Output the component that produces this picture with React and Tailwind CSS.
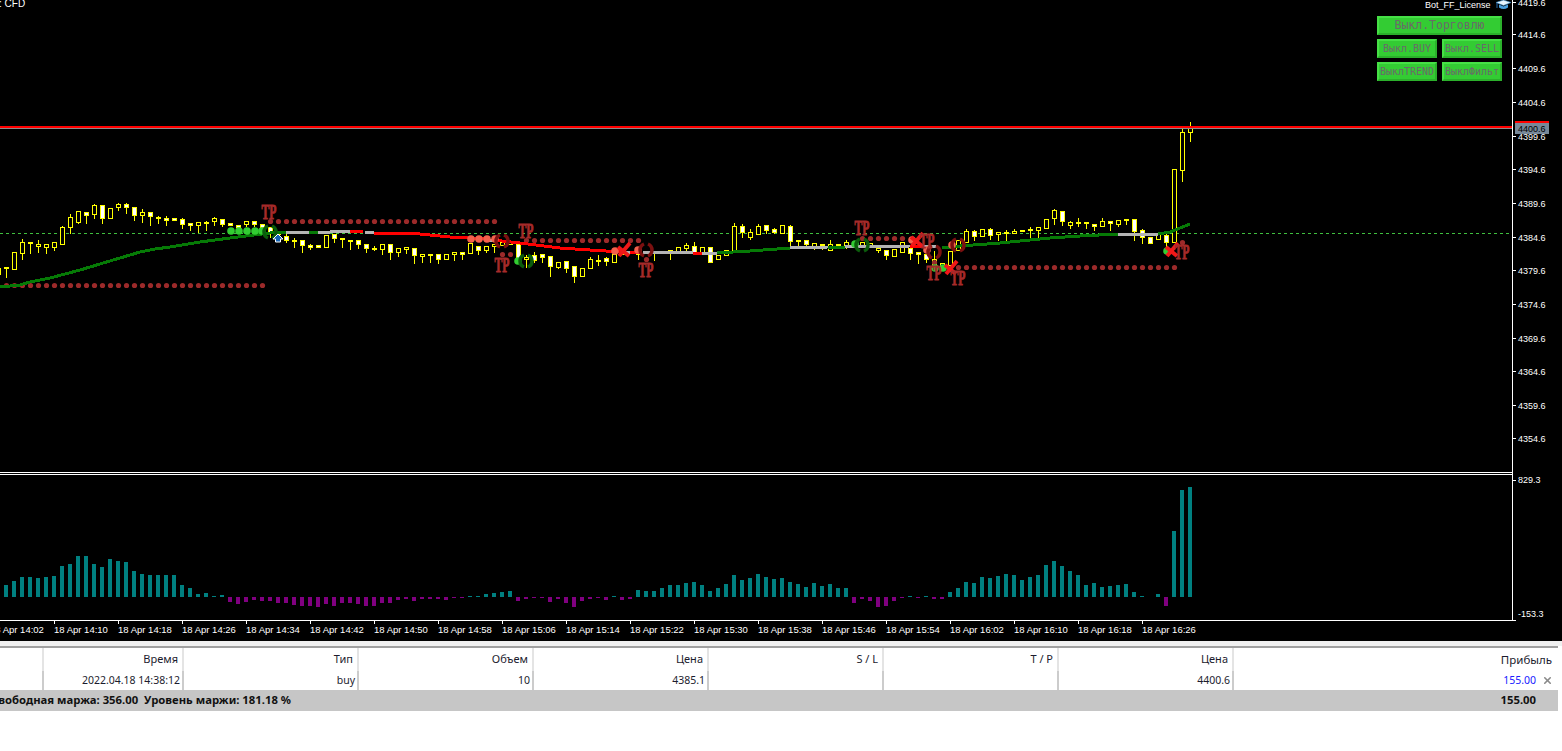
import { X } from 'lucide-react'

// Candles left to right, 8px apart: [bodyTop, bodyBottom, wickTop, wickBottom, filled]
const candles = [
  [267,268,267,277,0],[252,269,252,269,0],[242,253,239,259,0],[242,243,242,253,0],[244,246,240,252,0],[244,247,244,253,0],
  [242,247,242,250,0],[227,244,226,244,0],[217,227,214,233,0],[211,222,211,223,0],[212,215,212,223,1],[205,214,204,218,0],
  [205,218,205,223,1],[208,218,208,218,0],[204,207,203,210,0],[204,207,203,213,1],[207,215,207,220,1],[212,215,209,222,0],
  [212,216,212,225,1],[217,218,216,223,0],[218,220,216,225,1],[218,220,218,220,1],[219,224,218,228,1],[223,225,223,230,1],
  [222,225,222,232,0],[222,223,221,230,0],[218,221,217,225,0],[219,224,219,226,1],[223,225,223,225,1],[225,227,225,227,1],
  [221,224,221,226,0],[221,224,221,226,1],[224,227,224,230,1],[227,232,227,237,1],[232,234,232,234,1],[236,240,234,242,1],
  [240,241,238,247,0],[240,245,240,252,1],[245,247,244,249,1],[245,247,245,247,1],[235,247,235,247,0],[234,238,234,242,1],
  [238,239,238,247,0],[240,241,240,249,0],[240,244,240,248,1],[244,248,244,252,1],[248,249,246,250,0],[244,249,244,254,0],
  [244,252,244,259,1],[248,252,248,256,0],[247,249,247,253,0],[248,255,248,263,1],[254,256,254,262,0],[254,255,254,262,0],
  [254,259,254,263,1],[254,259,254,259,0],[252,254,252,260,0],[252,254,252,259,1],[243,253,243,253,0],[246,250,246,254,1],
  [246,250,246,252,0],[244,246,244,252,0],[242,245,242,245,0],[242,244,242,244,0],[244,258,244,258,1],[257,259,255,267,0],
  [255,260,252,262,1],[254,257,254,262,1],[256,266,256,276,1],[262,267,262,268,0],[261,268,261,272,1],[266,276,266,282,1],
  [268,276,268,276,0],[259,268,257,268,0],[260,261,255,265,0],[258,261,257,265,1],[254,262,254,262,0],[251,254,251,254,0],
  [252,253,252,253,0],[253,254,250,259,0],[251,253,251,253,0],[252,253,252,260,0],[251,252,251,252,0],[250,252,250,259,0],
  [247,251,247,251,0],[245,248,243,250,0],[246,252,242,254,1],[247,253,247,253,0],[247,262,247,262,1],[255,259,255,259,0],
  [250,255,250,255,0],[226,251,223,251,0],[226,232,224,237,1],[232,237,229,239,0],[226,234,224,234,0],[225,230,225,233,1],
  [229,232,228,233,1],[225,233,225,233,0],[226,241,225,246,1],[240,241,240,247,0],[240,244,240,247,1],[243,246,243,249,0],
  [244,245,244,249,0],[244,250,240,250,0],[244,245,244,248,0],[242,246,240,248,0],[242,246,242,246,0],[242,247,242,247,0],
  [243,247,243,247,0],[248,250,248,252,0],[250,255,250,259,1],[249,256,249,256,0],[242,252,242,252,0],[248,253,248,259,1],
  [252,254,252,263,1],[254,259,254,262,1],[259,265,251,265,0],[263,268,263,268,0],[251,265,251,265,0],[240,250,240,250,0],
  [231,242,229,242,0],[231,236,230,240,1],[229,236,229,236,0],[229,235,228,239,1],[232,234,232,240,0],[232,233,230,240,0],
  [231,233,229,233,0],[230,231,230,231,0],[229,230,227,240,0],[227,230,227,239,0],[219,228,219,228,0],[210,218,209,224,0],
  [211,221,211,225,1],[222,225,221,228,0],[222,223,218,226,0],[222,223,222,228,0],[224,226,224,230,1],[221,226,218,226,0],
  [221,223,221,230,1],[220,224,220,226,0],[219,220,219,224,0],[219,231,219,240,1],[230,237,229,243,1],[237,243,237,243,1],
  [233,239,233,239,0],[235,242,232,251,1],[169,242,169,242,0],[132,170,128,181,0],[128,132,122,141,0],
]

// Oscillator values, one per candle, in px above or below the zero line
const histogram = [
  12,16,20,20,19,20,21,31,33,41,41,33,30,38,36,35,26,23,22,22,22,22,12,9,3,4,1,2,
  -5,-7,-5,-3,-4,-4,-6,-6,-8,-9,-9,-10,-7,-9,-6,-6,-7,-9,-9,-6,-6,-3,
  -2,-4,-2,-2,-2,-3,-1,-1,1,1,3,4,5,6,-4,-2,-1,-1,-5,-2,-6,-10,-4,-2,-1,-3,1,-3,-2,
  7,6,6,9,12,12,14,15,12,6,9,13,22,17,19,23,20,18,19,15,13,
  10,14,11,13,9,9,-6,-2,-4,-10,-9,-4,-1,1,-1,1,-2,-2,
  5,9,15,14,20,19,21,23,22,17,20,22,32,36,31,26,22,12,14,10,11,12,13,5,1,0,3,-9,66,107,110,
]

const prices = [
  ['4419.6', 2], ['4414.6', 34], ['4409.6', 68], ['4404.6', 102], ['4399.6', 136], ['4394.6', 169], ['4389.6', 203],
  ['4384.6', 237], ['4379.6', 270], ['4374.6', 304], ['4369.6', 338], ['4364.6', 371], ['4359.6', 405], ['4354.6', 438],
]

const GREEN = '#067a06'
const GRAY = '#b4b4b4'
const RED = '#ff0000'

const maSegments = [
  [GREEN, '0,287 20,285 30,282 50,278 65,274 80,270 100,264 120,258 140,252 155,249 170,247 200,242 230,238 270,233 286,232'],
  [GRAY, '286,232 309,232'],
  [GREEN, '309,232 318,232'],
  [GRAY, '318,232 330,232 350,231'],
  [RED, '350,231 363,231'],
  [GRAY, '365,232 374,232'],
  [RED, '374,233 400,233 420,234 450,237 486,239'],
  [GRAY, '486,240 493,240'],
  [RED, '493,240 520,243 560,248 590,250 622,252'],
  [GRAY, '622,252 630,252'],
  [RED, '630,252 640,252'],
  [GRAY, '643,252 650,252 693,253'],
  [RED, '693,253 702,253'],
  [GRAY, '702,253 717,253'],
  [GREEN, '717,253 750,251 790,248'],
  [GRAY, '790,248 828,247'],
  [GREEN, '828,247 845,247'],
  [GRAY, '845,247 910,246'],
  [RED, '910,246 923,246'],
  [GRAY, '923,246 936,246'],
  [GREEN, '942,248 960,246 1000,243 1050,238 1080,236 1118,234'],
  [GRAY, '1118,234 1158,234'],
  [GREEN, '1158,234 1170,232 1175,230 1190,224'],
]

const dotRows = [
  [285, 6, 262],
  [221, 270, 494],
  [240, 526, 638],
  [254, 502, 510],
  [259, 646, 646],
  [238, 862, 902],
  [267, 958, 1174],
  [242, 1182, 1182],
  [262, 934, 934],
]

const tpLabels = [[269, 219], [526, 238], [502, 272], [646, 277], [862, 235], [927, 248], [934, 280], [958, 285], [1182, 259]]
const greenDots = [[231, 231], [239, 231], [247, 231], [255, 231], [262, 231], [518, 261], [855, 244], [935, 268], [943, 268], [1167, 251]]
const salmonDots = [[471, 239], [479, 239], [487, 239], [495, 239], [615, 251], [638, 250], [912, 240], [927, 250], [952, 245]]
const greenRings = [[270, 232], [526, 261], [862, 245]]
const redRings = [[502, 241], [646, 250], [934, 252], [958, 245]]
const crosses = [[624, 250], [917, 240], [951, 268], [1172, 250]]

const times = ['14:02', '14:10', '14:18', '14:26', '14:34', '14:42', '14:50', '14:58', '15:06', '15:14', '15:22', '15:30', '15:38', '15:46', '15:54', '16:02', '16:10', '16:18', '16:26']

const columns = [
  { w: 'w-[44px]', head: '', cell: '' },
  { w: 'w-[140px]', head: 'Время', cell: '2022.04.18 14:38:12' },
  { w: 'w-[175px]', head: 'Тип', cell: 'buy' },
  { w: 'w-[175px]', head: 'Объем', cell: '10' },
  { w: 'w-[175px]', head: 'Цена', cell: '4385.1' },
  { w: 'w-[175px]', head: 'S / L', cell: '' },
  { w: 'w-[175px]', head: 'T / P', cell: '' },
  { w: 'w-[175px]', head: 'Цена', cell: '4400.6' },
]

function Candle({ index, data }) {
  const [top, bottom, wickTop, wickBottom, filled] = data
  const x = 6 + index * 8
  return (
    <g>
      <line x1={x + 0.5} x2={x + 0.5} y1={wickTop} y2={wickBottom + 1} stroke="#ffff00" />
      <rect x={x - 1.5} y={top + 0.5} width={4} height={Math.max(bottom - top, 1)} fill={filled ? '#ffffff' : '#000000'} stroke="#ffff00" />
    </g>
  )
}

function Ring({ x, y, color }) {
  return (
    <g fill="none" stroke={color} strokeWidth="3.5">
      <path d={`M${x - 2} ${y - 6} A6.5 6.5 0 0 0 ${x - 2} ${y + 6}`} />
      <path d={`M${x + 2} ${y - 6} A6.5 6.5 0 0 1 ${x + 2} ${y + 6}`} />
    </g>
  )
}

function MainChart() {
  return (
    <svg className="block w-full h-[473px]" viewBox="0 0 1562 473" fontFamily="'Liberation Sans', sans-serif">
      <text x="-1" y="7" fontSize="10" fill="#ffffff">: CFD</text>

      <g shapeRendering="crispEdges">
        <line x1="0" x2="1512" y1="233.5" y2="233.5" stroke="#3fbf3f" strokeDasharray="3 3" />
        <Candle index={-1} data={[268, 274, 268, 274, 1]} />
        {candles.map((c, i) => <Candle key={i} index={i} data={c} />)}
      </g>

      {dotRows.map(([y, from, to]) =>
        Array.from({ length: (to - from) / 8 + 1 }, (_, i) => (
          <circle key={`${y}-${i}`} cx={from + i * 8 + 0.5} cy={y + 0.5} r="2.6" fill="#9c2a2a" />
        ))
      )}

      <g fill="none" strokeWidth="3" shapeRendering="crispEdges">
        {maSegments.map(([color, points], i) => <polyline key={i} points={points} stroke={color} />)}
      </g>

      {salmonDots.map(([x, y]) => <circle key={x} cx={x} cy={y} r="3.8" fill="#f4604c" />)}
      {greenDots.map(([x, y]) => <circle key={x} cx={x} cy={y} r="3.8" fill="#32cd32" />)}
      {greenRings.map(([x, y]) => <Ring key={x} x={x} y={y} color="#0b5c0b" />)}
      {redRings.map(([x, y]) => <Ring key={x} x={x} y={y} color="#7c1010" />)}
      {crosses.map(([x, y]) => (
        <path key={x} d={`M${x - 6} ${y - 3} L${x + 5} ${y + 6} M${x - 5} ${y + 6} L${x + 6} ${y - 7}`} stroke="#f01818" strokeWidth="4" fill="none" />
      ))}
      {tpLabels.map(([x, y]) => (
        <text key={x} x={x - 7.5} y={y} fontFamily="'Liberation Serif', serif" fontWeight="700" fontSize="21" fill="#a52a2a" stroke="#a52a2a" strokeWidth="1" textLength="15" lengthAdjust="spacingAndGlyphs">TP</text>
      ))}
      <path d="M278 234 L283 239 L280.5 239 L280.5 242 L275.5 242 L275.5 239 L273 239 Z" fill="#1464b4" stroke="#ffffff" />

      <g shapeRendering="crispEdges">
        <rect x="0" y="126" width="1512" height="2" fill="#ff0000" />
        <rect x="0" y="128" width="1512" height="1" fill="#8a8a8a" />
        <rect x="1512" y="0" width="1" height="473" fill="#ffffff" />
        <rect x="0" y="472" width="1513" height="1" fill="#ffffff" />
        {prices.map(([, y]) => <rect key={y} x="1512" y={y} width="4" height="1" fill="#ffffff" />)}
      </g>
      {prices.map(([label, y]) => (
        <text key={label} x="1518" y={y + 3.5} fontSize="9" fill="#ffffff">{label}</text>
      ))}

      <g shapeRendering="crispEdges">
        <rect x="1515" y="123" width="34" height="11" fill="#778899" />
        <rect x="1515" y="121" width="34" height="2" fill="#ff0000" />
      </g>
      <text x="1518" y="132" fontSize="9" fill="#000000">4400.6</text>
    </svg>
  )
}

function IndicatorChart() {
  return (
    <svg className="block w-full h-[148px]" viewBox="0 473 1562 148" fontFamily="'Liberation Sans', sans-serif">
      <g shapeRendering="crispEdges">
        {histogram.map((v, i) => (
          <rect key={i} x={4 + i * 8} y={v >= 0 ? 597 - v : 597} width={4} height={Math.abs(v)} fill={v >= 0 ? '#008080' : '#800080'} />
        ))}
        <rect x="0" y="474" width="1513" height="1" fill="#ffffff" />
        <rect x="0" y="620" width="1513" height="1" fill="#ffffff" />
        <rect x="1512" y="473" width="1" height="148" fill="#ffffff" />
        <rect x="1512" y="480" width="4" height="1" fill="#ffffff" />
        <rect x="1512" y="620" width="4" height="1" fill="#ffffff" />
      </g>
      <text x="1518" y="483" fontSize="9" fill="#ffffff">829.3</text>
      <text x="1518" y="617" fontSize="9" fill="#ffffff">-153.3</text>
    </svg>
  )
}

function TimeAxis() {
  return (
    <div className="flex h-[20px] bg-black -ml-[10px] overflow-hidden">
      {times.map((t) => (
        <div key={t} className="w-[64px] shrink-0">
          <div className="w-px h-[3px] bg-white" />
          <div className="text-[9.5px] leading-[12px] text-white whitespace-nowrap">18 Apr {t}</div>
        </div>
      ))}
    </div>
  )
}

function ToggleButton({ label, className }) {
  return (
    <div className={`flex items-center justify-center h-[19px] bg-[#33cc33] border-2 border-t-[#46e046] border-l-[#46e046] border-r-[#2bb02b] border-b-[#2bb02b] font-['DejaVu_Sans_Mono'] text-[#6a6a6a] whitespace-nowrap ${className}`}>
      {label}
    </div>
  )
}

function GraduationCap() {
  return (
    <svg width="15" height="10" viewBox="0 0 15 10">
      <path d="M7.5 0 L15 2.5 L7.5 5.5 L0 2.5 Z" fill="#e8f4fc" stroke="#3a8fd0" strokeWidth="0.6" />
      <path d="M3 4.5 L3 7.5 Q7.5 10.5 12 7.5 L12 4.5 L7.5 6.5 Z" fill="#4aa0e0" />
      <rect x="0.5" y="3" width="1" height="5" fill="#2a6fb0" />
    </svg>
  )
}

function ChartOverlay() {
  return (
    <>
      <div className="absolute top-0 left-[1425px] flex items-center gap-[5px] h-[10px] text-[9px] leading-[10px] text-white">
        <span>Bot_FF_License</span>
        <GraduationCap />
      </div>
      <div className="absolute top-[16px] left-[1377px] w-[125px] flex flex-col gap-[4px]">
        <ToggleButton label="Выкл.Торговлю" className="w-full h-[19px] text-[11.5px]" />
        <div className="flex gap-[5px]">
          <ToggleButton label="Выкл.BUY" className="w-[60px] text-[10px]" />
          <ToggleButton label="Выкл.SELL" className="w-[60px] text-[10px]" />
        </div>
        <div className="flex gap-[5px]">
          <ToggleButton label="ВыклTREND" className="w-[60px] text-[10px]" />
          <ToggleButton label="ВыклФильт" className="w-[60px] text-[10px]" />
        </div>
      </div>
    </>
  )
}

function TradeTable() {
  return (
    <div className="flex-1 bg-white text-[#1c1c2e] font-['Noto_Sans']">
      <div className="h-[5px] bg-[#f0f0f0]" />
      <div className="flex h-[25px] mr-[4px] border-t-2 border-t-[#a0a0a0] text-[11px]">
        {columns.map((col, i) => (
          <div key={i} className={`${col.w} shrink-0 flex items-center justify-end pr-[4px] border-r-2 border-r-[#e4e4e4]`}>{col.head}</div>
        ))}
        <div className="flex-1 flex items-center justify-end pr-[6px] text-[11.5px]">Прибыль</div>
      </div>
      <div className="flex h-[19px] mr-[4px] text-[10.5px]">
        {columns.map((col, i) => (
          <div key={i} className={`${col.w} shrink-0 flex items-center justify-end pr-[2px] border-r-2 border-r-[#cccccc]`}>{col.cell}</div>
        ))}
        <div className="flex-1 flex items-center justify-end">
          <span className="text-[#2020ff]">155.00</span>
          <X size={11} strokeWidth={3.5} className="text-[#8a8a8a] ml-[6px] mr-[5px]" />
        </div>
      </div>
      <div className="flex items-center justify-between h-[21px] mr-[4px] pr-[22px] -ml-[9px] bg-[#c6c6c6] font-bold text-[#111111] text-[11.3px]">
        <span className="whitespace-pre">Свободная маржа: 356.00  Уровень маржи: 181.18 %</span>
        <span>155.00</span>
      </div>
    </div>
  )
}

export default function App() {
  return (
    <div className="flex flex-col w-full h-[751px] overflow-hidden bg-white font-['Liberation_Sans']">
      <div className="relative bg-black">
        <MainChart />
        <ChartOverlay />
        <IndicatorChart />
        <TimeAxis />
      </div>
      <TradeTable />
    </div>
  )
}
